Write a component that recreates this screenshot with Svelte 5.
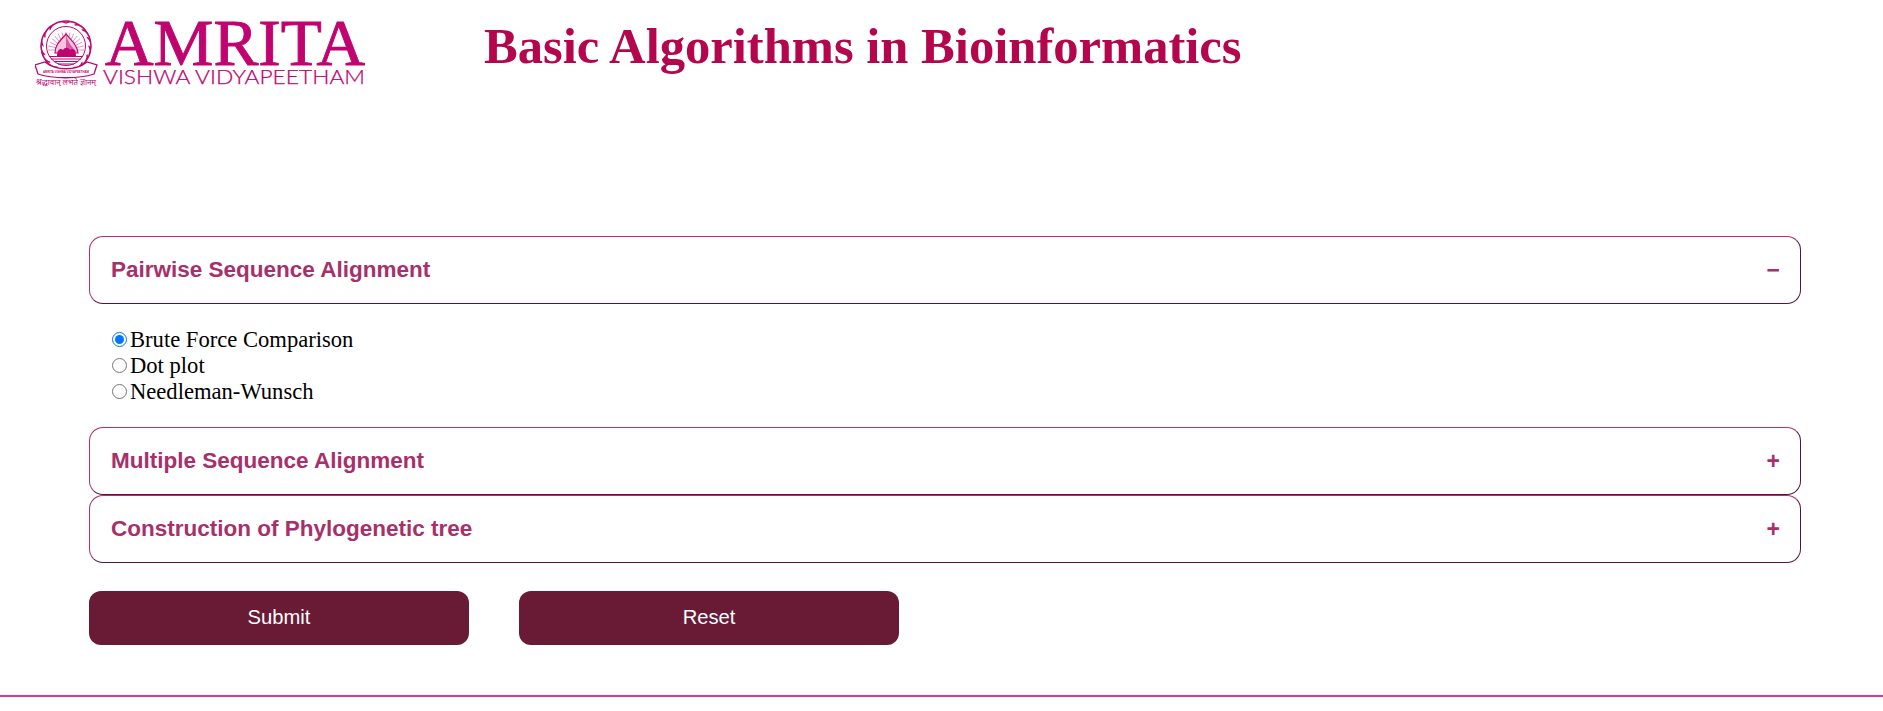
<script>
	let open = $state(0);
	let algo = $state('brute');

	const sections = [
		{
			title: 'Pairwise Sequence Alignment',
			options: [
				{ id: 'brute', label: 'Brute Force Comparison' },
				{ id: 'dot', label: 'Dot plot' },
				{ id: 'nw', label: 'Needleman-Wunsch' }
			]
		},
		{
			title: 'Multiple Sequence Alignment',
			options: [
				{ id: 'star', label: 'Star Alignment' },
				{ id: 'progressive', label: 'Progressive Alignment' }
			]
		},
		{
			title: 'Construction of Phylogenetic tree',
			options: [
				{ id: 'upgma', label: 'UPGMA' },
				{ id: 'nj', label: 'Neighbor Joining' }
			]
		}
	];

	// seal geometry, in logo units
	const cx = 31;
	const cy = 26;
	const rays = Array.from({ length: 15 }, (_, i) => -180 + i * (180 / 14));
	const petals = Array.from({ length: 16 }, (_, i) => i * 22.5);

	function toggle(i) {
		open = open === i ? -1 : i;
	}
</script>

<header class="top">
	<svg class="logo" viewBox="0 -20 332 86" role="img" aria-label="Amrita Vishwa Vidyapeetham">
		<g fill="none" stroke="#c0046f">
			<!-- seal -->
			{#each petals as a}
				<ellipse {cx} {cy} rx="8.5" ry="4.5" transform="rotate({a} {cx} {cy}) translate(0 -20.5)" stroke-width="1.6" fill="#fff" />
			{/each}
			<circle {cx} {cy} r="22.5" fill="#fff" stroke="none" />
			<circle {cx} {cy} r="19.5" stroke-width="1" />
			{#each rays as r}
				<line x1={cx} y1={cy + 4} x2={cx + 18 * Math.cos((r * Math.PI) / 180)} y2={cy + 4 + 18 * Math.sin((r * Math.PI) / 180)} stroke-width="0.8" opacity="0.55" />
			{/each}
			<path d="M20 33 C20 25 25 21 31 14 C37 21 42 25 43 33 Z" fill="#f4c6de" stroke-width="1.2" />
			<path d="M31 14 C32 20 36 27 43 33 L31 33 Z" fill="#d95aa2" stroke="none" />
			<path d="M22 36 C22 29 26 28 28 30 C30 27 33 27 35 30 C37 28 41 29 41 36 Z" fill="#c0046f" stroke="none" />
			<path d="M14 36.5H48M16 39H46M19 41.5H43M23 44H39" stroke-width="1.1" />
			<path d="M0 45 L10 42 C21 51 41 51 52 42 L62 45 L59 54 C44 59 18 59 3 54 Z" fill="#fff" stroke-width="1.3" />
		</g>
		<text class="banner" x="8" y="53" textLength="46" lengthAdjust="spacingAndGlyphs">AMRITA VISHWA VIDYAPEETHAM</text>
		<text class="motto" x="1" y="65" textLength="60" lengthAdjust="spacingAndGlyphs">श्रद्धावान् लभते ज्ञानम्</text>
		<text class="brand" x="70" y="45" textLength="260" lengthAdjust="spacingAndGlyphs">AMRITA</text>
		<text class="sub" x="68" y="64" textLength="262" lengthAdjust="spacingAndGlyphs">VISHWA VIDYAPEETHAM</text>
	</svg>
	<h1>Basic Algorithms in Bioinformatics</h1>
</header>

<main>
	<div class="accordion">
		{#each sections as section, i}
			<button class="acc-head" type="button" onclick={() => toggle(i)} aria-expanded={open === i}>
				<span>{section.title}</span>
				<span class="sign">{open === i ? '−' : '+'}</span>
			</button>
			{#if open === i}
				<div class="panel">
					{#each section.options as opt}
						<label class="opt">
							<input type="radio" name="algo" value={opt.id} bind:group={algo} />
							<span>{opt.label}</span>
						</label>
					{/each}
				</div>
			{/if}
		{/each}
	</div>

	<div class="actions">
		<button type="button" class="btn">Submit</button>
		<button type="button" class="btn" onclick={() => (algo = 'brute')}>Reset</button>
	</div>
</main>

<hr class="rule" />

<style>
	:global(body) {
		margin: 0;
		background: #fff;
		font-family: 'Liberation Serif', 'Times New Roman', serif;
	}

	.top {
		display: flex;
		align-items: flex-start;
		height: 236px;
		padding: 0 0 0 35px;
		box-sizing: border-box;
	}

	.logo {
		width: 332px;
		height: 86px;
		flex-shrink: 0;
	}

	.brand {
		font-family: 'Liberation Serif', serif;
		font-size: 65px;
		fill: #c0046f;
		stroke: #c0046f;
		stroke-width: 0.9px;
	}

	.sub {
		font-family: Lato, 'Liberation Sans', sans-serif;
		font-size: 19px;
		font-weight: 300;
		fill: #c0046f;
		stroke: #c0046f;
		stroke-width: 0.25px;
	}

	.motto {
		font-family: 'Noto Sans', 'DejaVu Sans', sans-serif;
		font-size: 8px;
		fill: #c0046f;
	}

	.banner {
		font-family: 'Liberation Sans', sans-serif;
		font-size: 4px;
		font-weight: bold;
		fill: #c0046f;
	}

	h1 {
		margin: 17px 0 0 117px;
		font-size: 50.6px;
		line-height: 58px;
		font-weight: bold;
		color: #b3064d;
		white-space: nowrap;
	}

	main {
		padding: 0 82px 0 89px;
	}

	.acc-head {
		display: flex;
		justify-content: space-between;
		align-items: center;
		width: 100%;
		height: 68px;
		padding: 0 20px 0 21px;
		box-sizing: border-box;
		background: #fff;
		border: 1px solid #b03070;
		border-right-color: #5a1238;
		border-bottom-color: #5a1238;
		border-radius: 14px;
		font-family: 'Liberation Sans', Arial, sans-serif;
		font-size: 22.5px;
		font-weight: bold;
		color: #a8306a;
		cursor: pointer;
	}

	.sign {
		font-size: 23px;
	}

	.panel {
		display: flex;
		flex-direction: column;
		padding: 23px 0 22px 23px;
	}

	.opt {
		display: flex;
		align-items: center;
		gap: 3px;
		font-size: 22.6px;
		line-height: 26px;
		color: #000;
	}

	.opt input {
		width: 15px;
		height: 15px;
		margin: -2px 0 0;
		flex-shrink: 0;
	}

	.actions {
		display: flex;
		gap: 50px;
		margin-top: 28px;
	}

	.btn {
		width: 380px;
		height: 54px;
		padding: 0 0 2px;
		background: #691a35;
		color: #fff;
		border: none;
		border-radius: 12px;
		font-family: 'Liberation Sans', Arial, sans-serif;
		font-size: 20.2px;
		cursor: pointer;
	}

	.rule {
		margin: 50px 0 0;
		border: none;
		height: 2px;
		background: #dc32a6;
	}
</style>
